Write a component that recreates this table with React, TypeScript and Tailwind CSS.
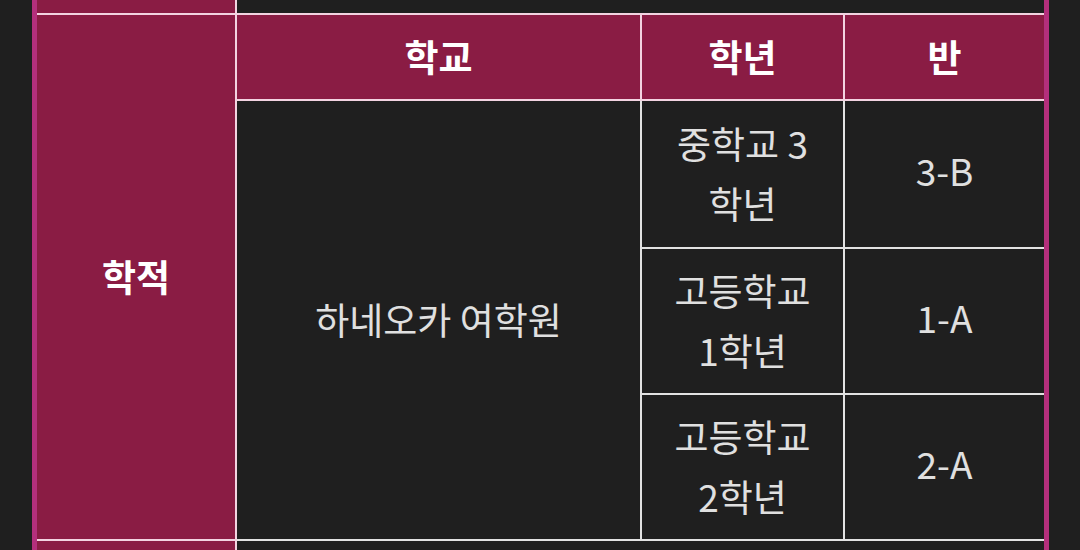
import React from "react";

const PINK = "border-[#f3d3e1]";
const GRAY = "border-[#e2e2e2]";

export default function App() {
  const font = { fontFamily: '"Noto Sans CJK KR", "Noto Sans", sans-serif' };
  const rows = [
    { grade: ["중학교 3", "학년"], cls: "3-B" },
    { grade: ["고등학교", "1학년"], cls: "1-A" },
    { grade: ["고등학교", "2학년"], cls: "2-A" },
  ];
  return (
    <div className="w-[1080px] h-[550px] overflow-hidden bg-[#1f1f1f] pl-[32px] pr-[31px]" style={font}>
      <div className="h-full border-x-[5px] border-[#b42f7c]">
        <div className="grid grid-cols-[200px_405px_203px_199px] grid-rows-[15px_86px_148px_146px_146px_9px] text-[37px] leading-[60px]">
          {/* previous row (partially visible) */}
          <div className={`bg-[#8a1c44] border-r-2 border-b-2 ${PINK}`} />
          <div className={`col-span-3 bg-[#1f1f1f] border-b-2 ${PINK}`} />

          <div className={`row-span-4 bg-[#8a1c44] border-r-2 border-b-2 ${PINK} flex items-center justify-center pb-[3px] font-bold text-white`}>
            학적
          </div>
          <div className={`bg-[#8a1c44] border-r-2 border-b-2 ${PINK} flex items-center justify-center pb-[3px] font-bold text-white`}>
            학교
          </div>
          <div className={`bg-[#8a1c44] border-r-2 border-b-2 ${PINK} flex items-center justify-center pb-[3px] font-bold text-white`}>
            학년
          </div>
          <div className={`bg-[#8a1c44] border-b-2 ${PINK} flex items-center justify-center pb-[3px] font-bold text-white`}>
            반
          </div>

          <div className={`row-span-3 row-start-3 col-start-2 bg-[#1f1f1f] border-r-2 border-b-2 ${GRAY} flex items-center justify-center pb-[3px] text-[#e0e0e0]`}>
            하네오카 여학원
          </div>
          {rows.map((r, i) => (
            <React.Fragment key={i}>
              <div className={`col-start-3 bg-[#1f1f1f] border-r-2 border-b-2 ${GRAY} flex flex-col items-center justify-center pb-[3px] text-[#e0e0e0]`}>
                <span>{r.grade[0]}</span>
                <span>{r.grade[1]}</span>
              </div>
              <div className={`col-start-4 bg-[#1f1f1f] border-b-2 ${GRAY} flex items-center justify-center pb-[8px] text-[#e0e0e0]`}>
                {r.cls}
              </div>
            </React.Fragment>
          ))}

          {/* next row (partially visible) */}
          <div className={`bg-[#8a1c44] border-r-2 ${PINK}`} />
          <div className="col-span-3 bg-[#1f1f1f]" />
        </div>
      </div>
    </div>
  );
}
